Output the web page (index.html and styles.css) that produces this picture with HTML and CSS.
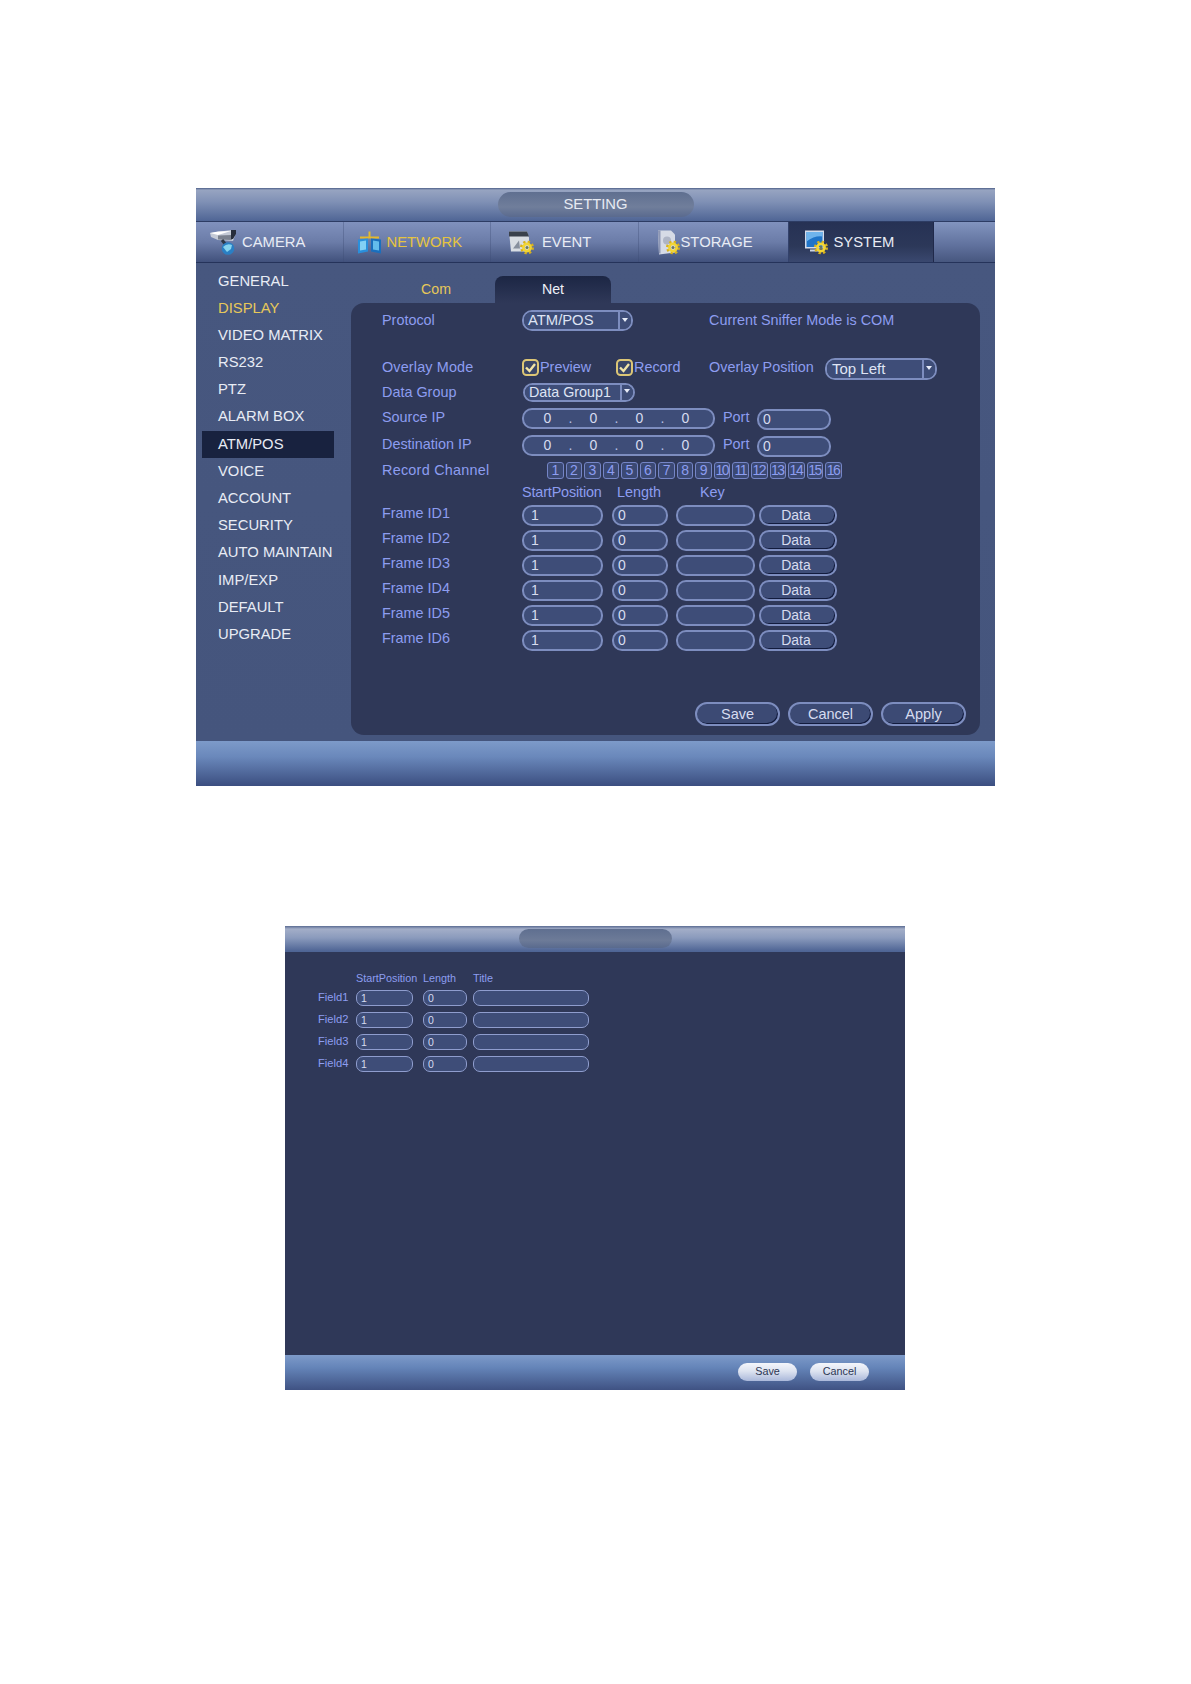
FILE: index.html
```html
<!DOCTYPE html>
<html lang="en">
<head>
<meta charset="utf-8">
<title>ATM/POS Setting</title>
<link rel="stylesheet" href="styles.css">
</head>
<body>
<svg class="defs" width="0" height="0" aria-hidden="true">
  <symbol id="gear" viewBox="0 0 14 14">
    <circle cx="7" cy="7" r="5.6" fill="none" stroke="#d9b21c" stroke-width="2.8" stroke-dasharray="2.2 2.200"/>
    <circle cx="7" cy="7" r="3.6" fill="none" stroke="#f2d535" stroke-width="2.600"/>
    <circle cx="7" cy="7" r="1.500" fill="#6d7a5a"/>
  </symbol>
</svg>

<section class="window">
  <header class="titlebar"><div class="pill">SETTING</div></header>
  <nav class="tabbar">
    <div class="tab t-camera">
      <svg class="icon i-camera" viewBox="0 0 26 25"><path d="M0 3 L21 0 L26 3 L23 11 L8 10 L1 7Z" fill="#c4cad6"/><path d="M0 3 L8 5 L21 1 L8 1.500Z" fill="#fff"/><path d="M8 5.500 L22 5 L22 10 L8 9.500Z" fill="#7a818e"/><path d="M21 0 h5 v4 l-3 5 -2 0Z" fill="#262d3b"/><path d="M12 10 l4 5" stroke="#2f3745" stroke-width="3"/><circle cx="18" cy="18.500" r="6.300" fill="#2a7fc4"/><path d="M13 17 q4 -4 9 -2 l-1 4 -4 3Z" fill="#86d4ef"/></svg>
      <span class="tab-label">CAMERA</span>
    </div>
    <div class="tab t-network active-yellow">
      <svg class="icon i-network" viewBox="0 0 23 22"><path d="M11.500 0 v6 M2 6 h19" stroke="#e3b92c" stroke-width="2"/><path d="M0 8 l10 -1 v13 l-10 2Z" fill="#2a8fdb"/><path d="M2 10 l6 -1 v9 l-6 1Z" fill="#83d0f4"/><path d="M13 7 l10 1 v14 l-10 -2Z" fill="#1a6fbd"/><path d="M15 9 l6 1 v9 l-6 -1Z" fill="#64bdec"/></svg>
      <span class="tab-label">NETWORK</span>
    </div>
    <div class="tab t-event">
      <svg class="icon i-event" viewBox="0 0 25 24"><path d="M0 1 h18 l2 6 v14 h-18Z" fill="#d8dde3"/><path d="M0 1 h18 l2 5 h-20Z" fill="#3a414c"/><path d="M4 18 l6 -8 l1 8Z" fill="#87909e"/><use href="#gear" x="11" y="10" width="14" height="14"/></svg>
      <span class="tab-label">EVENT</span>
    </div>
    <div class="tab t-storage">
      <svg class="icon i-storage" viewBox="0 0 22 24"><path d="M0 0 h13 l4 4 v18 l-16 2Z" fill="#d6dbe6"/><path d="M0 0 l2.500 0 v23 h-1.500Z" fill="#8d97b5"/><circle cx="9" cy="10" r="4" fill="#aeb5c6"/><use href="#gear" x="8" y="10" width="14" height="14"/></svg>
      <span class="tab-label">STORAGE</span>
    </div>
    <div class="tab active t-system">
      <svg class="icon i-system" viewBox="0 0 23 24"><path d="M0 0 h19 v18 h-19Z" fill="#d5dcea"/><path d="M1.500 1.500 h16 v15 h-16Z" fill="#1f74c8"/><path d="M1.500 11 q8 -6 16 -5 v-4.500 h-16Z" fill="#6fb4ec"/><path d="M5 19 h9 v2 h-9Z" fill="#cdd4e2"/><use href="#gear" x="9" y="10" width="14" height="14"/></svg>
      <span class="tab-label">SYSTEM</span>
    </div>
    <div class="tab-rest"></div>
  </nav>

  <div class="content">
    <aside class="sidenav">
      <div class="nav-item">GENERAL</div>
      <div class="nav-item current">DISPLAY</div>
      <div class="nav-item">VIDEO MATRIX</div>
      <div class="nav-item">RS232</div>
      <div class="nav-item">PTZ</div>
      <div class="nav-item">ALARM BOX</div>
      <div class="nav-item selected">ATM/POS</div>
      <div class="nav-item">VOICE</div>
      <div class="nav-item">ACCOUNT</div>
      <div class="nav-item">SECURITY</div>
      <div class="nav-item">AUTO MAINTAIN</div>
      <div class="nav-item">IMP/EXP</div>
      <div class="nav-item">DEFAULT</div>
      <div class="nav-item">UPGRADE</div>
    </aside>

    <main class="main">
      <div class="subtabs">
        <div class="subtab sub-com">Com</div>
        <div class="subtab sub-net">Net</div>
      </div>
      <div class="panel">
        <div class="row h-protocol">
          <div class="label">Protocol</div>
          <div class="select s-protocol"><span class="select-text">ATM/POS</span><span class="select-btn"></span></div>
          <div class="label sniffer">Current Sniffer Mode is COM</div>
        </div>
        <div class="row h-overlay">
          <div class="label">Overlay Mode</div>
          <div class="check-item c-preview"><svg class="check" viewBox="0 0 17 17"><rect x="1" y="1" width="15" height="15" rx="3.500" fill="#3a4667" stroke="#dcc676" stroke-width="2"/><path d="M4 8.500 L7.500 12 L13 5" fill="none" stroke="#f2e4a6" stroke-width="2.400"/></svg><span class="label">Preview</span></div>
          <div class="check-item c-record"><svg class="check" viewBox="0 0 17 17"><rect x="1" y="1" width="15" height="15" rx="3.500" fill="#3a4667" stroke="#dcc676" stroke-width="2"/><path d="M4 8.500 L7.500 12 L13 5" fill="none" stroke="#f2e4a6" stroke-width="2.400"/></svg><span class="label">Record</span></div>
          <div class="label overlay-pos">Overlay Position</div>
          <div class="select s-position"><span class="select-text big">Top Left</span><span class="select-btn"></span></div>
        </div>
        <div class="row h-group">
          <div class="label">Data Group</div>
          <div class="select s-group"><span class="select-text">Data Group1</span><span class="select-btn"></span></div>
        </div>
        <div class="row h-source">
          <div class="label">Source IP</div>
          <div class="field ip"><span>0</span><span>.</span><span>0</span><span>.</span><span>0</span><span>.</span><span>0</span></div>
          <div class="label port">Port</div>
          <div class="field port-input">0</div>
        </div>
        <div class="row h-dest">
          <div class="label">Destination IP</div>
          <div class="field ip"><span>0</span><span>.</span><span>0</span><span>.</span><span>0</span><span>.</span><span>0</span></div>
          <div class="label port">Port</div>
          <div class="field port-input">0</div>
        </div>
        <div class="row h-channel">
          <div class="label">Record Channel</div>
          <div class="channels">
            <span class="ch">1</span><span class="ch">2</span><span class="ch">3</span><span class="ch">4</span><span class="ch">5</span><span class="ch">6</span><span class="ch">7</span><span class="ch">8</span><span class="ch">9</span><span class="ch wide">10</span><span class="ch wide">11</span><span class="ch wide">12</span><span class="ch wide">13</span><span class="ch wide">14</span><span class="ch wide">15</span><span class="ch wide">16</span>
          </div>
        </div>
        <div class="row h-head">
          <div class="frame-grid head-grid"><span class="label start-head">StartPosition</span><span class="label len-head">Length</span><span class="label key-head">Key</span></div>
        </div>
        <div class="row h-frame"><div class="label">Frame ID1</div><div class="frame-grid"><div class="field num">1</div><div class="field num-len">0</div><div class="field key"></div><div class="btn-data">Data</div></div></div>
        <div class="row h-frame"><div class="label">Frame ID2</div><div class="frame-grid"><div class="field num">1</div><div class="field num-len">0</div><div class="field key"></div><div class="btn-data">Data</div></div></div>
        <div class="row h-frame"><div class="label">Frame ID3</div><div class="frame-grid"><div class="field num">1</div><div class="field num-len">0</div><div class="field key"></div><div class="btn-data">Data</div></div></div>
        <div class="row h-frame"><div class="label">Frame ID4</div><div class="frame-grid"><div class="field num">1</div><div class="field num-len">0</div><div class="field key"></div><div class="btn-data">Data</div></div></div>
        <div class="row h-frame"><div class="label">Frame ID5</div><div class="frame-grid"><div class="field num">1</div><div class="field num-len">0</div><div class="field key"></div><div class="btn-data">Data</div></div></div>
        <div class="row h-frame"><div class="label">Frame ID6</div><div class="frame-grid"><div class="field num">1</div><div class="field num-len">0</div><div class="field key"></div><div class="btn-data">Data</div></div></div>
        <div class="actions">
          <div class="btn-action">Save</div>
          <div class="btn-action">Cancel</div>
          <div class="btn-action">Apply</div>
        </div>
      </div>
    </main>
  </div>
  <footer class="footer"></footer>
</section>

<section class="window small">
  <header class="titlebar small-title"><div class="pill small-pill"></div></header>
  <div class="small-body">
    <div class="small-grid small-head"><span>StartPosition</span><span>Length</span><span>Title</span></div>
    <div class="small-row"><div class="small-label">Field1</div><div class="small-grid"><div class="mini">1</div><div class="mini">0</div><div class="mini"></div></div></div>
    <div class="small-row"><div class="small-label">Field2</div><div class="small-grid"><div class="mini">1</div><div class="mini">0</div><div class="mini"></div></div></div>
    <div class="small-row"><div class="small-label">Field3</div><div class="small-grid"><div class="mini">1</div><div class="mini">0</div><div class="mini"></div></div></div>
    <div class="small-row"><div class="small-label">Field4</div><div class="small-grid"><div class="mini">1</div><div class="mini">0</div><div class="mini"></div></div></div>
  </div>
  <footer class="small-footer">
    <div class="btn-light">Save</div>
    <div class="btn-light">Cancel</div>
  </footer>
</section>
</body>
</html>
```

FILE: styles.css
```css
* { box-sizing: border-box; }
html, body { margin: 0; padding: 0; background: #fff; }
body {
  height: 1684px;
  overflow: hidden;
  padding-top: 188px;
  font-family: "Liberation Sans", Arial, sans-serif;
}
.defs { display: block; height: 0; }

.window {
  width: 799px;
  margin-left: 196px;
  background: #45557f;
}
.window.small {
  width: 620px;
  margin-left: 285px;
  margin-top: 140px;
  background: #2f3858;
}

.titlebar {
  height: 34px;
  padding-top: 4px;
  display: flex;
  justify-content: center;
  background: linear-gradient(#4d5f88 0, #97a4c1 2px, #7f90b5 14px, #4f6595 33px);
  border-bottom: 1px solid #2d3c64;
}
.pill {
  width: 196px;
  height: 25px;
  border-radius: 13px;
  background: linear-gradient(#5f6f90, #707e9b 60%, #5a6a8e);
  color: #e6eaf2;
  font-size: 14.800px;
  line-height: 25px;
  text-align: center;
}

.tabbar {
  height: 41px;
  display: flex;
  background: linear-gradient(#8091bd, #6b7ca8 50%, #41517c);
  border-bottom: 1px solid #25335a;
}
.tab {
  width: 147.500px;
  display: flex;
  align-items: center;
  color: #e8ecf5;
  font-size: 14.800px;
  border-right: 1px solid rgba(60, 75, 115, .35);
}
.icon { flex: none; height: 25px; }
.t-camera { padding-left: 14px; }
.i-camera { width: 26px; margin-right: 6px; }
.t-network { padding-left: 14px; }
.i-network { width: 23px; margin-right: 6px; }
.t-event { padding-left: 18px; }
.i-event { width: 25px; margin-right: 8px; }
.t-storage { padding-left: 19px; width: 149px; border-right: 0; }
.i-storage { width: 22px; margin-right: 1px; }
.t-system { padding-left: 16px; width: 146px; }
.i-system { width: 23px; margin-right: 6px; }
.active-yellow { color: #e6c440; }
.active {
  background: linear-gradient(#263154, #2c3859 60%, #3a486f);
  border-right: 1px solid #20294a;
  border-left: 1px solid #33426c;
}
.tab-rest {
  flex: 1;
  background: linear-gradient(#8294bf, #5f709c 60%, #47577f);
}

.content {
  height: 478px;
  display: flex;
  background: linear-gradient(#47577f, #45557d);
}
.sidenav {
  width: 155px;
  padding: 4.500px 0 0 6px;
}
.nav-item {
  width: 132px;
  height: 27.200px;
  line-height: 27px;
  padding-left: 16px;
  color: #e8ecf5;
  font-size: 14.800px;
  white-space: nowrap;
}
.nav-item.current { color: #e6c85a; }
.nav-item.selected { background: #18223f; }

.main { flex: 1; padding: 13px 15px 0 0; }
.subtabs { display: flex; height: 27px; padding-left: 40px; }
.subtab {
  text-align: center;
  line-height: 26px;
  font-size: 14.200px;
}
.sub-com { color: #e6c85a; width: 90px; margin-right: 14px; }
.sub-net {
  width: 116px;
  color: #eef1f8;
  border-radius: 8px 8px 0 0;
  background: linear-gradient(#1c2644, #2f3858);
}
.panel {
  height: 432px;
  border-radius: 13px;
  background: #2f3858;
  padding: 4px 0 0 31px;
}

.row { display: flex; align-items: center; white-space: nowrap; }
.label { color: #8d9df0; font-size: 14.400px; }
.row > .label:first-child { width: 140px; flex: none; }
.h-protocol { height: 26px; }
.h-overlay { height: 26px; margin-top: 21px; }
.h-overlay > .label:first-child { letter-spacing: .15px; }
.h-group { height: 24px; }
.h-source { height: 26px; }
.h-dest { height: 28px; }
.h-channel { height: 24px; }
.h-channel > .label:first-child { letter-spacing: .25px; }
.h-head { height: 19px; padding-left: 140px; }
.h-frame { height: 24.900px; }

.select {
  display: flex;
  flex: none;
  height: 21px;
  border: 2px solid #7d8dbf;
  border-radius: 10px;
  background: #35415f;
  color: #dfe4f4;
  font-size: 14.800px;
  line-height: 17px;
  overflow: hidden;
}
.select-text { flex: 1; padding-left: 4px; background: #3e4d78; }
.select-text.big { font-size: 15px; padding-left: 5px; }
.select-btn {
  position: relative;
  flex: none;
  width: 13px;
  border-left: 2px solid #7d8dbf;
  background: #3e4d78;
}
.select-btn::after {
  content: "";
  position: absolute;
  left: 2px;
  top: 6px;
  border: 3.500px solid transparent;
  border-top: 4px solid #e8ecf8;
  border-bottom: 0;
}
.s-protocol { width: 111px; margin-top: 1px; }
.sniffer { margin-left: 76px; }
.s-position { width: 112px; height: 22px; margin-top: 4px; }
.s-group { width: 112px; height: 19px; margin-left: 1px; margin-top: 1px; }
.s-group .select-text { padding-left: 4px; line-height: 15px; font-size: 14.300px; }
.s-group .select-btn::after { top: 4px; }

.check-item { display: flex; align-items: center; }
.check {
  flex: none;
  width: 17px;
  height: 17px;
  margin-right: 1px;
}
.c-preview { width: 94px; }
.c-record { width: 93px; }
.overlay-pos { width: 116px; }

.field {
  flex: none;
  height: 21px;
  border: 2px solid #7d8dbf;
  border-radius: 10px;
  background: #3e4d78;
  color: #d6dcf0;
  font-size: 14px;
  line-height: 17px;
}
.num { padding-left: 7px; }
.num-len { padding-left: 4px; }
.ip {
  width: 193px;
  display: grid;
  grid-template-columns: repeat(7, 23px);
  justify-items: center;
  padding-left: 12px;
  margin-top: 3px;
}
.ip span:nth-child(even) { color: #b8c2e6; }
.port { width: 34px; margin-left: 8px; }
.port-input { width: 74px; padding-left: 4px; margin-top: 5px; }

.channels { display: flex; gap: 2px; margin-left: 25px; }
.ch {
  width: 16.560px;
  height: 17px;
  border: 1px solid #7585c6;
  border-radius: 3px;
  color: #8d9df0;
  font-size: 14px;
  line-height: 15px;
  text-align: center;
  background: #3b4974;
}
.ch.wide { letter-spacing: -1.500px; padding-right: 1px; }

.frame-grid {
  display: grid;
  grid-template-columns: 81px 56px 79px 78px;
  column-gap: 9px;
  margin-top: 5px;
}
.key { width: 79px; margin-left: -1px; }
.head-grid { margin-top: 0; }
.start-head { letter-spacing: -.15px; }
.len-head { padding-left: 5px; }
.key-head { padding-left: 23px; }
.btn-data {
  width: 78px;
  margin-left: -6px;
  height: 21px;
  padding-right: 4px;
  border: 2px solid #7d8dbf;
  border-radius: 10px;
  background: #3e4d78;
  box-shadow: inset -1px -1px 0 #121b3d;
  color: #d6dcf0;
  font-size: 14px;
  line-height: 17px;
  text-align: center;
}

.actions {
  display: flex;
  gap: 8px;
  justify-content: flex-end;
  margin-top: 51.600px;
  padding-right: 14px;
}
.btn-action {
  width: 85px;
  height: 24px;
  border: 2px solid #7d8dbf;
  border-radius: 12px;
  background: #3c4a74;
  box-shadow: inset -1px -1px 0 #121b3d;
  color: #d6dcf0;
  font-size: 14.500px;
  line-height: 21px;
  text-align: center;
}

.footer {
  height: 45px;
  background: linear-gradient(#7d9ac9, #6a88bb 35%, #3b4e80);
}

.small-title {
  height: 26px;
  padding-top: 3px;
  background: linear-gradient(#5a6b92 0, #a3aec8 3px, #8a9abc 12px, #4f6595 25px);
  border-bottom: 0;
}
.small-pill {
  width: 153px;
  height: 19px;
  background: linear-gradient(#5f6f90, #6d7b98 60%, #596a8e);
}
.small-body { height: 403px; padding: 18px 0 0 33px; }
.small-grid {
  display: grid;
  grid-template-columns: 57px 44px 116px;
  column-gap: 10px;
}
.small-grid > :nth-child(3) { margin-left: -4px; width: 116px; }
.small-head {
  height: 16px;
  margin-left: 38px;
  margin-bottom: 4px;
  align-items: center;
  color: #8d9df0;
  font-size: 10.800px;
}
.small-row { display: flex; height: 16px; margin-bottom: 5.900px; }
.small-label {
  width: 38px;
  color: #8d9df0;
  font-size: 11.200px;
  line-height: 15px;
}
.mini {
  height: 16px;
  border: 1px solid #8f9dce;
  border-radius: 7px;
  background: #3e4d78;
  color: #d6dcf0;
  font-size: 10.500px;
  line-height: 14px;
  padding-left: 4px;
}
.small-footer {
  height: 35px;
  display: flex;
  gap: 13px;
  justify-content: flex-end;
  padding: 8px 36px 0 0;
  background: linear-gradient(#7d9ac9, #6585b9 35%, #3f5283);
}
.btn-light {
  width: 59px;
  height: 18px;
  border-radius: 9px;
  background: linear-gradient(#f4f6fb, #dde3f0 45%, #aab8da);
  color: #2d3754;
  font-size: 10.800px;
  line-height: 17px;
  text-align: center;
}
```
